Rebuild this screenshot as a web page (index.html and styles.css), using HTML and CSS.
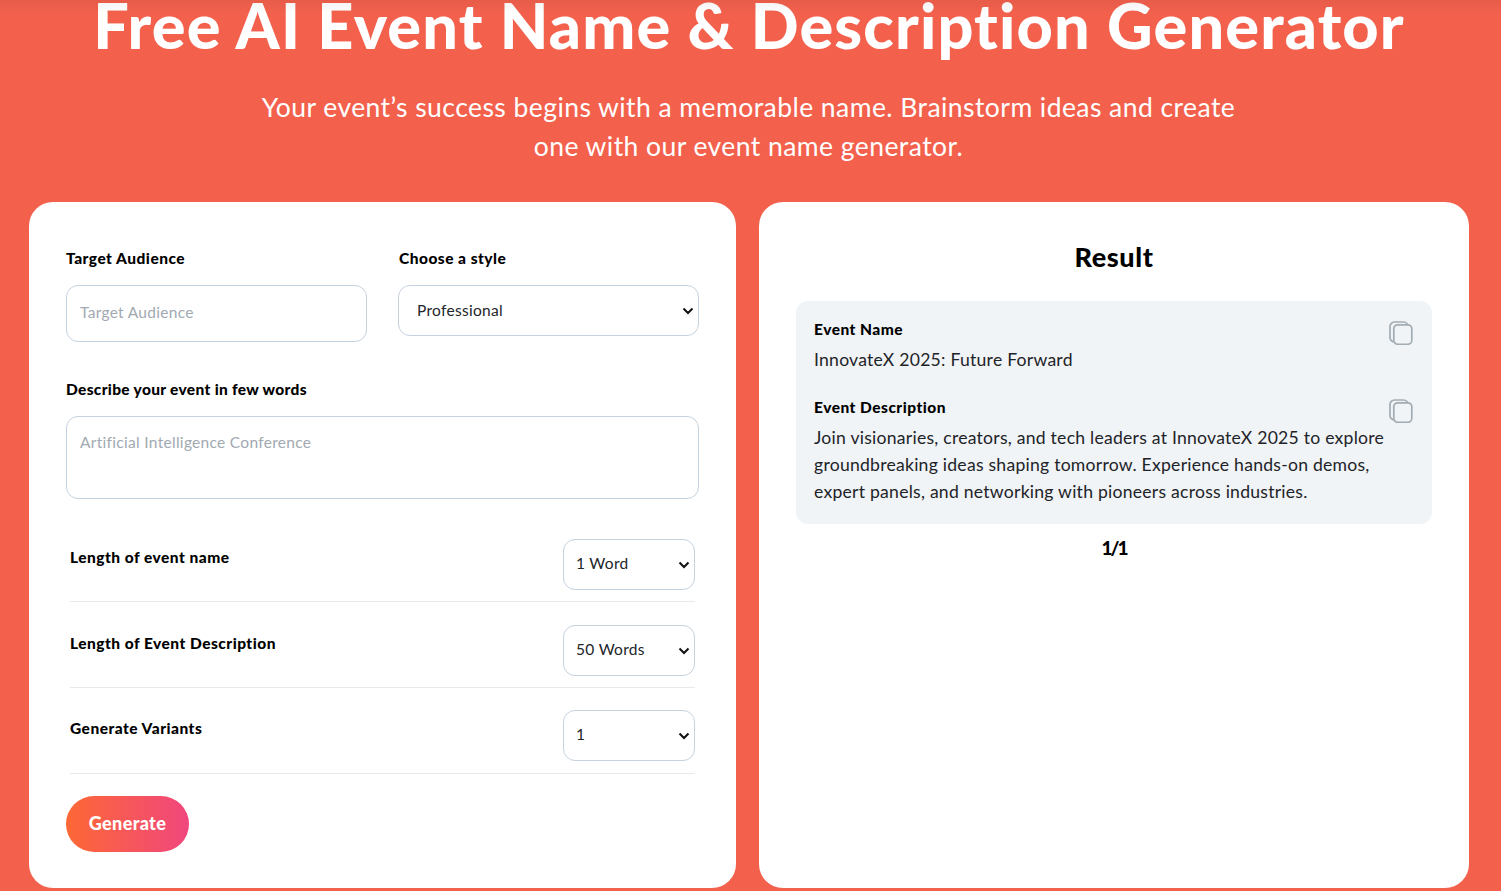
FILE: index.html
```html
<!DOCTYPE html>
<html lang="en">
<head>
<meta charset="utf-8">
<title>Free AI Event Name &amp; Description Generator</title>
<link rel="stylesheet" href="styles.css">
</head>
<body>
<header class="hero">
  <h1 class="hero-title">Free AI Event Name &amp; Description Generator</h1>
  <p class="hero-sub">Your event’s success begins with a memorable name. Brainstorm ideas and create<br>one with our event name generator.</p>
</header>
<main class="panels">
  <form class="card form-card">
    <div class="two-col">
      <div class="field">
        <label class="label">Target Audience</label>
        <input class="input" type="text" placeholder="Target Audience">
      </div>
      <div class="field">
        <label class="label style-label">Choose a style</label>
        <select class="select style-select"><option>Professional</option></select>
      </div>
    </div>
    <div class="field describe">
      <label class="label describe-label">Describe your event in few words</label>
      <textarea class="textarea" placeholder="Artificial Intelligence Conference"></textarea>
    </div>
    <div class="option-row first">
      <span class="label">Length of event name</span>
      <select class="select small-select"><option>1 Word</option></select>
    </div>
    <div class="option-row">
      <span class="label">Length of Event Description</span>
      <select class="select small-select"><option>50 Words</option></select>
    </div>
    <div class="option-row last">
      <span class="label">Generate Variants</span>
      <select class="select small-select"><option>1</option></select>
    </div>
    <button class="generate" type="button">Generate</button>
  </form>
  <section class="card result-card">
    <h2 class="result-title">Result</h2>
    <div class="result-box">
      <div class="result-item">
        <div class="result-text">
          <h3 class="label">Event Name</h3>
          <p class="result-body">InnovateX 2025: Future Forward</p>
        </div>
        <svg class="copy" viewBox="0 0 24 24" width="24" height="24" fill="none" stroke="#a3acb3" stroke-width="1.7"><rect x="1" y="1" width="18" height="20" rx="4.5"/><rect x="4.8" y="3.8" width="18" height="19.5" rx="4" fill="#f0f4f7"/></svg>
      </div>
      <div class="result-item second">
        <div class="result-text">
          <h3 class="label">Event Description</h3>
          <p class="result-body">Join visionaries, creators, and tech leaders at InnovateX 2025 to explore groundbreaking ideas shaping tomorrow. Experience hands-on demos, expert panels, and networking with pioneers across industries.</p>
        </div>
        <svg class="copy" viewBox="0 0 24 24" width="24" height="24" fill="none" stroke="#a3acb3" stroke-width="1.7"><rect x="1" y="1" width="18" height="20" rx="4.5"/><rect x="4.8" y="3.8" width="18" height="19.5" rx="4" fill="#f0f4f7"/></svg>
      </div>
    </div>
    <div class="pager">1/1</div>
  </section>
</main>
</body>
</html>
```
FILE: styles.css
```css
* { box-sizing: border-box; }
html, body { margin: 0; height: 891px; overflow: hidden; }
body { background: #f3614d; font-family: "Lato", "Liberation Sans", sans-serif; color: #000; font-variant-ligatures: none; }
body::before { content: ""; position: absolute; top: 0; left: 0; right: 0; height: 14px; background: linear-gradient(rgba(0,0,0,.05), rgba(0,0,0,0)); z-index: 2; }

.hero { text-align: center; color: #fff; height: 202px; padding-top: 1px; }
.hero-title { margin: -12px 0 0; font-size: 63px; line-height: 72px; font-weight: 900; letter-spacing: 1.15px; white-space: nowrap; padding-right: 3px; }
.hero-sub { margin: 27px 0 0; font-size: 26.5px; line-height: 39px; font-weight: 400; letter-spacing: .44px; padding-right: 4px; }

.panels { display: flex; gap: 23px; padding-left: 29px; }
.card { background: #fff; border-radius: 24px; height: 686px; padding: 0 37px; }
.form-card { width: 707px; padding-top: 46px; }
.result-card { width: 710px; padding-top: 39px; }

.two-col { display: grid; grid-template-columns: 301px 301px; column-gap: 31px; }
.field { display: flex; flex-direction: column; align-items: stretch; }
.label { display: block; margin: 0; font-size: 15.5px; line-height: 20px; font-weight: 900; letter-spacing: .48px; color: #000; }
.field .label { margin-bottom: 17px; }
.style-label { padding-left: 1px; }
.field .describe-label { letter-spacing: .32px; }

.input, .textarea, .select {
  border: 1px solid #c5d2df; background-color: #fff; font-family: inherit; font-size: 15.5px; letter-spacing: .3px; color: #212529; outline: none;
}
.input { height: 57px; border-radius: 12px; padding: 0 13px 3px; }
.input::placeholder, .textarea::placeholder { color: #a1a9b1; opacity: 1; }
.select {
  border-radius: 12px; height: 51px; appearance: none;
  background-image: url("data:image/svg+xml,%3Csvg xmlns='http://www.w3.org/2000/svg' width='12' height='8' viewBox='0 0 12 8'%3E%3Cpath d='M1.5 1.5 6 6l4.5-4.5' fill='none' stroke='%23111' stroke-width='2'/%3E%3C/svg%3E");
  background-repeat: no-repeat; background-position: right 4px center;
}
.style-select { padding: 0 18px 2px; width: 301px; }
.describe { margin-top: 37px; }
.textarea { height: 83px; border-radius: 12px; padding: 16px 13px; resize: none; display: block; }

.option-row { display: flex; justify-content: space-between; align-items: flex-start; width: 625px; margin-left: 4px; height: 86px; padding-top: 23px; border-bottom: 1px solid #e7e9eb; }
.option-row .label { padding-top: 8px; }
.option-row.first { margin-top: 17px; }
.option-row.last { padding-top: 22px; }
.small-select { width: 132px; padding: 0 12px 3px; }

.generate { display: block; margin-top: 22px; width: 123px; height: 56px; border: 0; border-radius: 28px; padding: 0 0 3px; color: #fff; font-family: inherit; font-size: 18px; font-weight: 900; letter-spacing: .35px; background: linear-gradient(90deg, #fd6835, #f0477d); }

.result-title { margin: 0; text-align: center; font-size: 27px; line-height: 32px; font-weight: 900; letter-spacing: .6px; }
.result-box { margin-top: 28px; background: #f0f4f7; border-radius: 12px; padding: 18px; height: 223px; }
.result-item { display: flex; justify-content: space-between; align-items: flex-start; }
.result-item.second { margin-top: 24px; }
.result-text { width: 575px; }
.result-body { margin: 7px 0 0; font-size: 17.6px; line-height: 27px; letter-spacing: .24px; color: #1e2328; }
.copy { flex: none; margin: 2px 1px 0 0; }
.pager { margin-top: 12px; text-align: center; font-size: 19px; line-height: 24px; font-weight: 900; letter-spacing: -2px; }
```
